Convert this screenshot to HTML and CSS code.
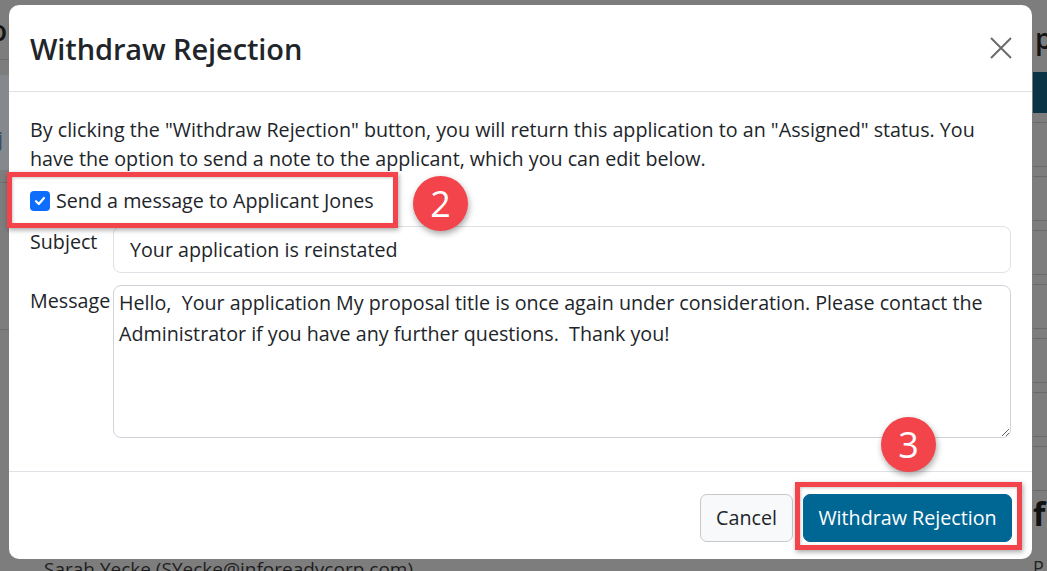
FILE: index.html
```html
<!DOCTYPE html>
<html lang="en">
<head>
<meta charset="utf-8">
<title>Withdraw Rejection</title>
<link rel="stylesheet" href="styles.css">
</head>
<body>
<div class="page">
  <div class="page-left">
    <div class="bg-heading">ou</div>
    <div class="bg-band"><span class="bg-frag">j</span></div>
    <div class="bg-rule"></div>
    <div class="bg-rule low"></div>
    <div class="bg-name">Sarah Yecke (SYecke@inforeadycorp.com)</div>
  </div>
  <div class="page-right">
    <div class="bg-heading">p</div>
    <div class="bg-bar"></div>
    <div class="bg-rows">
      <div class="bg-row"></div><div class="bg-row"></div><div class="bg-row"></div>
      <div class="bg-row"></div><div class="bg-row"></div><div class="bg-row"></div>
      <div class="bg-row"></div><div class="bg-row"></div><div class="bg-row"></div>
      <div class="bg-row"></div><div class="bg-row"></div><div class="bg-row"></div>
      <div class="bg-row"></div><div class="bg-row"></div>
    </div>
    <div class="bg-f">f</div>
    <div class="bg-p">P</div>
  </div>
</div>

<div class="modal">
  <div class="modal-header">
    <h4 class="modal-title">Withdraw Rejection</h4>
    <button class="btn-close" type="button" aria-label="Close">
      <svg width="22" height="22" viewBox="0 0 22 22"><path d="M1 1 L21 21 M21 1 L1 21" stroke="#6b6b6b" stroke-width="2" fill="none"/></svg>
    </button>
  </div>
  <div class="modal-body">
    <p class="intro">By clicking the "Withdraw Rejection" button, you will return this application to an "Assigned" status. You have the option to send a note to the applicant, which you can edit below.</p>
    <label class="check-row">
      <span class="checkbox"><svg width="14" height="14" viewBox="0 0 14 14"><path d="M3 7.2 L5.8 10 L11 4" stroke="#fff" stroke-width="2.2" fill="none" stroke-linecap="round" stroke-linejoin="round"/></svg></span>
      <span>Send a message to Applicant Jones</span>
    </label>
    <div class="field-row">
      <span class="field-label">Subject</span>
      <input class="field-input" type="text" value="Your application is reinstated">
    </div>
    <div class="field-row">
      <span class="field-label">Message</span>
      <textarea class="field-area">Hello,  Your application My proposal title is once again under consideration. Please contact the Administrator if you have any further questions.  Thank you!</textarea>
    </div>
  </div>
  <div class="modal-footer">
    <button class="btn btn-cancel" type="button">Cancel</button>
    <button class="btn btn-primary" type="button">Withdraw Rejection</button>
  </div>
</div>

<div class="callout-box box-check"></div>
<div class="callout-num num-2">2</div>
<div class="callout-box box-btn"></div>
<div class="callout-num num-3">3</div>
</body>
</html>
```
FILE: styles.css
```css
* { box-sizing: border-box; }
html, body { margin: 0; padding: 0; }
body {
  width: 1047px;
  height: 571px;
  overflow: hidden;
  position: relative;
  background: #7d7d7d;
  font-family: "Open Sans", "Noto Sans", sans-serif;
  color: #212529;
}

/* dimmed page behind */
.page { display: flex; justify-content: space-between; height: 571px; }
.page-left { width: 460px; display: flex; flex-direction: column; }
.page-right { width: 14px; display: flex; flex-direction: column; }
.bg-heading {
  font-size: 28px; font-weight: 600; color: #141414;
  height: 60px; line-height: 60px; margin-left: -10px;
  border-bottom: 1px solid #6e6e6e;
}
.page-right .bg-heading { margin-left: 2px; height: 72px; line-height: 76px; border-bottom: 0; }
.bg-band { height: 95px; margin-top: 15px; background: #85898d; }
.bg-frag { display: block; font-size: 20px; color: #3c4f66; margin-top: 50px; margin-left: -2px; }
.bg-rule { height: 1px; background: #6e6e6e; margin-top: 12px; }
.bg-rule.low { margin-top: 146px; }
.bg-name { margin-top: auto; font-size: 19px; color: #1e1e1e; margin-left: 44px; line-height: 20px; margin-bottom: -8px; white-space: nowrap; }
.bg-bar { height: 41px; background: #0b3346; }
.bg-rows { display: flex; flex-direction: column; }
.bg-row { height: 44px; border-bottom: 1px solid #6a6a6a; }
.bg-row:nth-child(odd) { height: 10px; }
.bg-f { font-size: 32px; font-weight: 700; color: #111; line-height: 30px; margin-top: 8px; }
.bg-p { font-size: 18px; color: #222; margin-top: auto; line-height: 20px; margin-bottom: -6px; }

/* modal */
.modal {
  position: absolute;
  left: 9px;
  top: 5px;
  width: 1023px;
  height: 554px;
  background: #fff;
  border-radius: 10px;
  display: flex;
  flex-direction: column;
}
.modal-header {
  height: 87px;
  border-bottom: 1px solid #dee2e6;
  display: flex;
  align-items: center;
  justify-content: space-between;
  padding: 0 20px 0 21px;
}
.modal-title { margin: 0; font-size: 29px; font-weight: 600; color: #212529; letter-spacing: -0.1px; }
.btn-close { border: 0; background: none; padding: 0; width: 22px; height: 22px; }
.btn-close svg { display: block; }

.modal-body { padding: 23px 21px 0 21px; font-size: 19.7px; line-height: 29px; flex: 1; }
.intro { margin: 0 0 13px 0; }
.check-row { display: flex; align-items: center; gap: 6px; height: 29px; margin-bottom: 11px; }
.checkbox { width: 20px; height: 20px; border-radius: 4px; background: #0d6efd; display: flex; align-items: center; justify-content: center; }
.field-row { display: flex; align-items: flex-start; margin-bottom: 12px; }
.field-label { width: 83px; flex: none; line-height: 29px; margin-top: 1px; }
.field-input {
  flex: 1;
  height: 47px;
  border: 1px solid #dee2e6;
  border-radius: 8px;
  padding: 0 16px;
  font: inherit;
  font-size: 19.7px;
  color: #212529;
  background: #fff;
}
.field-area {
  flex: 1;
  height: 153px;
  border: 1px solid #ced4da;
  border-radius: 8px;
  padding: 1px 5px;
  font: inherit;
  font-size: 19.7px;
  line-height: 31px;
  color: #212529;
  background: #fff;
  resize: vertical;
}

.modal-footer {
  height: 88px;
  border-top: 1px solid #dee2e6;
  display: flex;
  align-items: center;
  justify-content: flex-end;
  gap: 10px;
  padding: 4px 20px 0 0;
}
.btn { height: 48px; border-radius: 7px; font: inherit; font-size: 19.7px; padding: 0; }
.btn-cancel { width: 93px; background: #f8f9fa; border: 1px solid #c7c8c9; color: #212529; }
.btn-primary { width: 209px; background: #006795; border: 1px solid #006795; color: #fff; }

/* annotations */
.callout-box {
  position: absolute;
  border: 5px solid #f2444a;
  box-shadow: 1px 2px 5px rgba(0,0,0,0.35), inset 1px 1px 3px rgba(0,0,0,0.2);
}
.box-check { left: 7px; top: 172px; width: 391px; height: 56px; }
.box-btn { left: 795px; top: 482px; width: 227px; height: 68px; }
.callout-num {
  position: absolute;
  width: 55px;
  height: 55px;
  border-radius: 50%;
  background: #f2444a;
  color: #fff;
  font-size: 36px;
  line-height: 55px;
  text-align: center;
  box-shadow: 1px 3px 6px rgba(0,0,0,0.35);
}
.num-2 { left: 413px; top: 176px; }
.num-3 { left: 881px; top: 417px; }
```
